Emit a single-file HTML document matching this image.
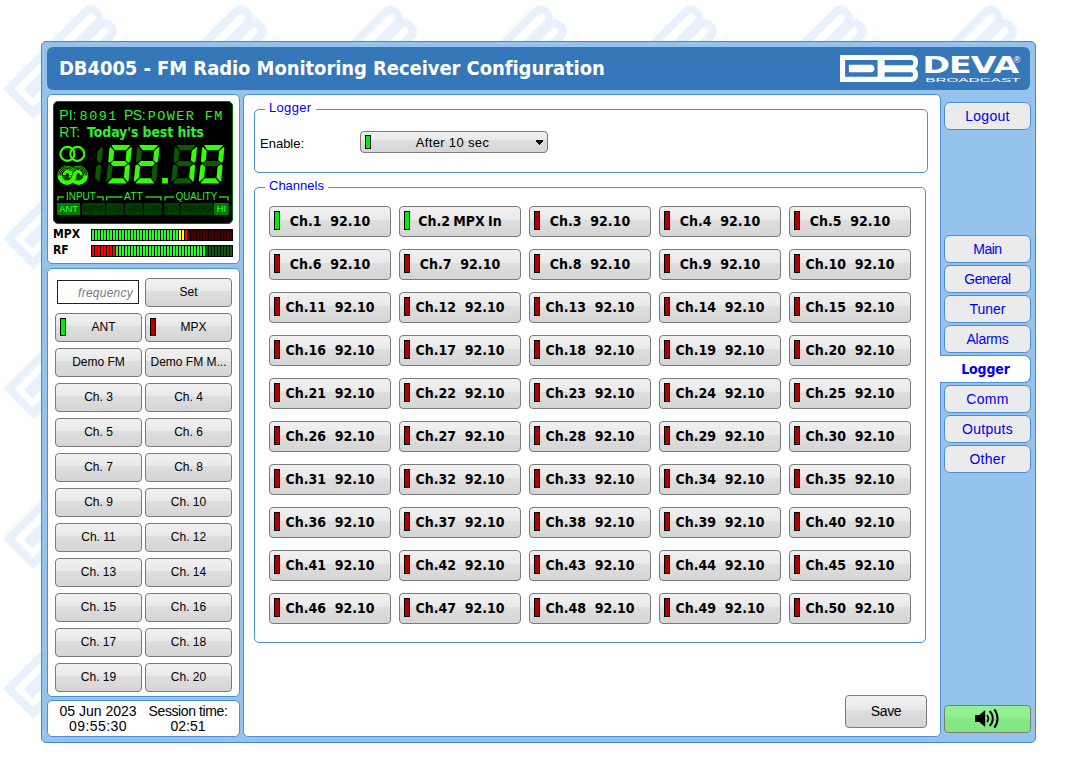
<!DOCTYPE html>
<html><head><meta charset="utf-8"><title>DB4005</title>
<style>
*{box-sizing:border-box;margin:0;padding:0}
html,body{width:1077px;height:784px;overflow:hidden;background:#fff}
body{position:relative;font-family:"Liberation Sans", sans-serif;font-size:13px;color:#000}
.abs{position:absolute}
#frame{position:absolute;left:41px;top:41px;width:995px;height:702px;background:#96c3ec;border:1px solid #4489cf;border-radius:5px}
#hdr{position:absolute;left:47px;top:47px;width:983px;height:43px;background:#3577b8;border-radius:6px}
#title{position:absolute;left:59px;top:55px;letter-spacing:-0.07px;font:bold 20px "DejaVu Sans Condensed", "Liberation Sans", sans-serif;color:#fff;white-space:pre;line-height:26px}
.panel{position:absolute;background:#fff;border:1px solid #4a90d6;border-radius:5px}
.btn{position:absolute;border:1px solid #7a7a7a;border-radius:4px;background:linear-gradient(to bottom,#f1f1f1 0%,#e9e9e9 45%,#dedede 46%,#d5d5d5 100%);text-align:center;white-space:pre;overflow:hidden}
.lb{width:87px;height:29px;font-size:12px;line-height:26px}
.cb{width:122px;height:31px;font:bold 14px "DejaVu Sans Condensed", "Liberation Sans", sans-serif;line-height:29px;text-align:left}
.cb span{position:absolute;left:0;right:0;top:0;text-align:center}
.ind{position:absolute;border:1px solid #000;width:6px}
.g{background:#00ee00}
.r{background:#b00000}
.nb{position:absolute;left:944px;width:87px;height:28px;background:#ebebeb;border:1px solid #4a8fd4;border-radius:6px;color:#0000f0;text-align:center;font-size:14px;line-height:26px}
.fs{position:absolute;border:1px solid #4a90d6;border-radius:5px}
.mlab{font:bold 12px "DejaVu Sans Condensed", "Liberation Sans", sans-serif;line-height:16px}
.tabsel{position:absolute;left:941px;width:90px;height:28px;background:#fff;border:1px solid #4a90d6;border-left:0;border-radius:0 7px 7px 0;color:#0000f0;text-align:center;font:bold 14px "DejaVu Sans Condensed", "Liberation Sans", sans-serif;letter-spacing:-0.15px;line-height:26px}
.lg{position:absolute;background:#fff;color:#0000f0;font-size:13px;line-height:15px;padding:0 4px}
</style></head>
<body>
<svg class="abs" style="left:0;top:0" width="1077" height="784"><defs><pattern id="wm" width="150" height="150" patternUnits="userSpaceOnUse"><g transform="translate(3,88.8) rotate(-45) scale(1.59)"><path fill="#e9f1fc" d="M0 0H70.5Q78 0 78 7Q78 11.8 75.3 13.4Q78 15 78 20Q78 27 70.5 27H0Z"/><path fill="#fff" d="M5.1 5.1H37.6V21.8H5.1Z"/><path fill="#e9f1fc" d="M8.9 9.7H30.6A3.8 3.8 0 0 1 30.6 17.3H8.9Z"/><path fill="#fff" d="M44.6 5.1H70.9A2.55 2.55 0 0 1 70.9 10.2H44.6Z"/><path fill="#fff" d="M44.6 17.3H70.9A2.25 2.25 0 0 1 70.9 21.8H44.6Z"/><circle cx="77.1" cy="31.9" r="1.7" fill="none" stroke="#e9f1fc" stroke-width="0.5"/></g></pattern></defs><rect width="1050" height="750" fill="url(#wm)"/></svg>
<div id="frame"></div>
<div id="hdr"></div>
<svg class="abs" style="left:836px;top:50px" width="192" height="38" viewBox="0 0 192 38"><g transform="translate(4,5)"><path fill="#fff" d="M0 0H70.5Q78 0 78 7Q78 11.8 75.3 13.4Q78 15 78 20Q78 27 70.5 27H0Z"/><path fill="#3577b8" d="M5.1 5.1H37.6V21.8H5.1Z"/><path fill="#fff" d="M8.9 9.7H30.6A3.8 3.8 0 0 1 30.6 17.3H8.9Z"/><path fill="#3577b8" d="M44.6 5.1H70.9A2.55 2.55 0 0 1 70.9 10.2H44.6Z"/><path fill="#3577b8" d="M44.6 17.3H70.9A2.25 2.25 0 0 1 70.9 21.8H44.6Z"/></g><text transform="translate(86.39999999999998,22.700000000000003) scale(1.49,1)" font-family="'DejaVu Sans','Liberation Sans',sans-serif" font-weight="bold" font-size="22.3" fill="#fff" letter-spacing="-0.6">DEVA</text><text x="89.20000000000005" y="31.700000000000003" font-family="'Liberation Sans',sans-serif" font-size="6" fill="#fff" textLength="95.3" lengthAdjust="spacingAndGlyphs">BROADCAST</text><text x="177.60000000000002" y="12.600000000000001" font-family="'Liberation Sans',sans-serif" font-size="9.5" fill="#fff">®</text></svg>
<div id="title">DB4005 - FM Radio Monitoring Receiver Configuration</div>
<div class="panel" style="left:47px;top:94px;width:193px;height:170px"></div>
<div class="panel" style="left:47px;top:268px;width:193px;height:429px"></div>
<div class="panel" style="left:47px;top:700px;width:193px;height:37px"></div>
<div class="panel" style="left:243px;top:94px;width:698px;height:643px"></div>
<svg class="abs" style="left:53px;top:101px" width="180" height="123" viewBox="0 0 180 123"><rect x="0.5" y="0.5" width="179" height="122" rx="4.5" fill="#000" stroke="#006a00"/><g fill="#2ff02f" font-family="'Liberation Sans',sans-serif" font-size="14"><text x="6.3" y="18.9">PI:</text><text x="26.6" y="18.9" font-family="'Liberation Mono',monospace" font-size="13.5" letter-spacing="1.45">8091</text><text x="71" y="18.9" letter-spacing="-0.5">PS:</text><text x="94.7" y="18.9" font-family="'Liberation Mono',monospace" font-size="13.5" letter-spacing="1.4" xml:space="preserve">POWER FM</text><text x="6.3" y="35.9">RT:</text><text x="34.1" y="35.9" font-family="'DejaVu Sans Condensed','Liberation Sans',sans-serif" font-weight="bold" font-size="14" letter-spacing="-0.12">Today's best hits</text></g><circle cx="14.400000000000006" cy="52.900000000000006" r="7.0" fill="none" stroke="#33ff00" stroke-width="2.1"/><circle cx="24.299999999999997" cy="52.900000000000006" r="7.0" fill="none" stroke="#33ff00" stroke-width="2.1"/><path d="M8.00 74.20A6.0 6.0 0 0 1 20.00 74.20" fill="none" stroke="#2fe800" stroke-width="0.8"/><path d="M6.45 74.20A7.55 7.55 0 0 1 21.55 74.20" fill="none" stroke="#2fe800" stroke-width="0.8"/><path d="M4.90 74.20A9.1 9.1 0 0 1 23.10 74.20" fill="none" stroke="#2fe800" stroke-width="0.8"/><path d="M19.50 74.20A6.0 6.0 0 0 1 31.50 74.20" fill="none" stroke="#2fe800" stroke-width="0.8"/><path d="M17.95 74.20A7.55 7.55 0 0 1 33.05 74.20" fill="none" stroke="#2fe800" stroke-width="0.8"/><path d="M16.40 74.20A9.1 9.1 0 0 1 34.60 74.20" fill="none" stroke="#2fe800" stroke-width="0.8"/><path d="M8.60 73.9A5.4 5.4 0 0 0 19.40 73.9Z" fill="#0e7000"/><path d="M16.50 73.90A2.5 2.5 0 0 1 11.50 73.90" fill="none" stroke="#021500" stroke-width="0.7"/><path d="M18.20 73.90A4.2 4.2 0 0 1 9.80 73.90" fill="none" stroke="#021500" stroke-width="0.7"/><path d="M20.10 73.9A5.4 5.4 0 0 0 30.90 73.9Z" fill="#0e7000"/><path d="M28.00 73.90A2.5 2.5 0 0 1 23.00 73.90" fill="none" stroke="#021500" stroke-width="0.7"/><path d="M29.70 73.90A4.2 4.2 0 0 1 21.30 73.90" fill="none" stroke="#021500" stroke-width="0.7"/><path d="M32.80 74.35000000000001A7.3 7.3 0 0 1 18.20 74.35000000000001" fill="none" stroke="#33ff00" stroke-width="4.5"/><path d="M17.85 73.9A2.65 2.65 0 0 0 11.35 73.9" fill="none" stroke="#33ff00" stroke-width="3.2"/><clipPath id="rdsc"><rect x="15.00" y="65.90" width="11.00" height="13.5"/></clipPath><g clip-path="url(#rdsc)"><path d="M6.70 74.35000000000001A7.3 7.3 0 0 0 21.30 74.35000000000001" fill="none" stroke="#042400" stroke-width="6.1"/><path d="M21.65 73.9A2.65 2.65 0 0 1 28.15 73.9" fill="none" stroke="#042400" stroke-width="4.800000000000001"/></g><path d="M6.70 74.35000000000001A7.3 7.3 0 0 0 21.30 74.35000000000001" fill="none" stroke="#33ff00" stroke-width="4.5"/><path d="M21.65 73.9A2.65 2.65 0 0 1 28.15 73.9" fill="none" stroke="#33ff00" stroke-width="3.2"/><path d="M21.00 74.65L22.55 72.4" stroke="#33ff00" stroke-width="3.4" fill="none"/><circle cx="14.00" cy="73.90" r="1.3" fill="#000"/><circle cx="25.50" cy="73.90" r="1.3" fill="#000"/><g transform="matrix(1,0,-0.0998,1,56.751,44.0)"><polygon points="1.80,0.45 2.40,0.00 20.00,0.00 20.60,0.45 16.65,5.30 5.75,5.30" fill="#33ff00"/><polygon points="22.40,3.00 21.75,1.75 17.40,5.95 17.40,15.15 20.55,17.80 22.25,16.55" fill="#33ff00"/><polygon points="22.25,20.55 20.55,19.30 17.40,21.85 17.40,32.55 21.75,36.75 22.40,35.50" fill="#33ff00"/><polygon points="1.80,38.05 2.40,38.50 20.00,38.50 20.60,38.05 16.65,33.20 5.75,33.20" fill="#33ff00"/><polygon points="0.15,20.55 1.85,19.30 5.00,21.85 5.00,32.55 0.65,36.75 0.00,35.50" fill="#0b5a00"/><polygon points="0.00,3.00 0.65,1.75 5.00,5.95 5.00,15.15 1.85,17.80 0.15,16.55" fill="#33ff00"/><polygon points="2.70,18.55 5.15,16.10 17.25,16.10 19.70,18.55 17.25,21.00 5.15,21.00" fill="#33ff00"/></g><g transform="matrix(1,0,-0.0998,1,84.351,44.0)"><polygon points="1.80,0.45 2.40,0.00 20.00,0.00 20.60,0.45 16.65,5.30 5.75,5.30" fill="#33ff00"/><polygon points="22.40,3.00 21.75,1.75 17.40,5.95 17.40,15.15 20.55,17.80 22.25,16.55" fill="#33ff00"/><polygon points="22.25,20.55 20.55,19.30 17.40,21.85 17.40,32.55 21.75,36.75 22.40,35.50" fill="#0b5a00"/><polygon points="1.80,38.05 2.40,38.50 20.00,38.50 20.60,38.05 16.65,33.20 5.75,33.20" fill="#33ff00"/><polygon points="0.15,20.55 1.85,19.30 5.00,21.85 5.00,32.55 0.65,36.75 0.00,35.50" fill="#33ff00"/><polygon points="0.00,3.00 0.65,1.75 5.00,5.95 5.00,15.15 1.85,17.80 0.15,16.55" fill="#0b5a00"/><polygon points="2.70,18.55 5.15,16.10 17.25,16.10 19.70,18.55 17.25,21.00 5.15,21.00" fill="#33ff00"/></g><g transform="matrix(1,0,-0.0998,1,121.951,44.0)"><polygon points="1.80,0.45 2.40,0.00 20.00,0.00 20.60,0.45 16.65,5.30 5.75,5.30" fill="#0b5a00"/><polygon points="22.40,3.00 21.75,1.75 17.40,5.95 17.40,15.15 20.55,17.80 22.25,16.55" fill="#33ff00"/><polygon points="22.25,20.55 20.55,19.30 17.40,21.85 17.40,32.55 21.75,36.75 22.40,35.50" fill="#33ff00"/><polygon points="1.80,38.05 2.40,38.50 20.00,38.50 20.60,38.05 16.65,33.20 5.75,33.20" fill="#0b5a00"/><polygon points="0.15,20.55 1.85,19.30 5.00,21.85 5.00,32.55 0.65,36.75 0.00,35.50" fill="#0b5a00"/><polygon points="0.00,3.00 0.65,1.75 5.00,5.95 5.00,15.15 1.85,17.80 0.15,16.55" fill="#0b5a00"/><polygon points="2.70,18.55 5.15,16.10 17.25,16.10 19.70,18.55 17.25,21.00 5.15,21.00" fill="#0b5a00"/></g><g transform="matrix(1,0,-0.0998,1,149.351,44.0)"><polygon points="1.80,0.45 2.40,0.00 20.00,0.00 20.60,0.45 16.65,5.30 5.75,5.30" fill="#33ff00"/><polygon points="22.40,3.00 21.75,1.75 17.40,5.95 17.40,15.15 20.55,17.80 22.25,16.55" fill="#33ff00"/><polygon points="22.25,20.55 20.55,19.30 17.40,21.85 17.40,32.55 21.75,36.75 22.40,35.50" fill="#33ff00"/><polygon points="1.80,38.05 2.40,38.50 20.00,38.50 20.60,38.05 16.65,33.20 5.75,33.20" fill="#33ff00"/><polygon points="0.15,20.55 1.85,19.30 5.00,21.85 5.00,32.55 0.65,36.75 0.00,35.50" fill="#33ff00"/><polygon points="0.00,3.00 0.65,1.75 5.00,5.95 5.00,15.15 1.85,17.80 0.15,16.55" fill="#33ff00"/><polygon points="2.70,18.55 5.15,16.10 17.25,16.10 19.70,18.55 17.25,21.00 5.15,21.00" fill="#0b5a00"/></g><g transform="matrix(1,0,-0.0998,1,27.851,44.0)"><polygon points="22.40,3.00 21.75,1.75 17.40,5.95 17.40,15.15 20.55,17.80 22.25,16.55" fill="#0b5a00"/><polygon points="22.25,20.55 20.55,19.30 17.40,21.85 17.40,32.55 21.75,36.75 22.40,35.50" fill="#0b5a00"/></g><rect x="109.1" y="76.9" width="5.8" height="5.6" fill="#33ff00"/><path d="M4.95 99.6V95.9H10.90" fill="none" stroke="#25c825" stroke-width="1.5"/><path d="M43.60 95.9H50.05V99.6" fill="none" stroke="#25c825" stroke-width="1.5"/><path d="M53.75 99.6V95.9H69.70" fill="none" stroke="#25c825" stroke-width="1.5"/><path d="M92.30 95.9H107.95V99.6" fill="none" stroke="#25c825" stroke-width="1.5"/><path d="M112.05 99.6V95.9H121.00" fill="none" stroke="#25c825" stroke-width="1.5"/><path d="M166.00 95.9H174.95V99.6" fill="none" stroke="#25c825" stroke-width="1.5"/><g fill="#2ff02f" font-family="'Liberation Sans',sans-serif" font-size="10.4" text-anchor="middle"><text x="27.900000000000006" y="98.80000000000001" textLength="30" lengthAdjust="spacingAndGlyphs">INPUT</text><text x="80.4" y="98.80000000000001">ATT</text><text x="143.5" y="98.80000000000001" textLength="41.5" lengthAdjust="spacingAndGlyphs">QUALITY</text></g><rect x="4.0" y="102" width="23.0" height="12" fill="#007a00"/><text x="15.50" y="110.5" fill="#3cff3c" font-family="'Liberation Sans',sans-serif" font-size="9.4" text-anchor="middle">ANT</text><rect x="29.0" y="102" width="23.0" height="12" fill="#003d00"/><text x="40.50" y="110.5" fill="#001f00" font-family="'Liberation Sans',sans-serif" font-size="9.4" text-anchor="middle">MPX</text><rect x="53.1" y="102" width="17.5" height="12" fill="#003d00"/><text x="61.85" y="110.5" fill="#001f00" font-family="'Liberation Sans',sans-serif" font-size="9.4" text-anchor="middle">-10</text><rect x="72.0" y="102" width="17.6" height="12" fill="#003d00"/><text x="80.80" y="110.5" fill="#001f00" font-family="'Liberation Sans',sans-serif" font-size="9.4" text-anchor="middle">-20</text><rect x="91.0" y="102" width="17.7" height="12" fill="#003d00"/><text x="99.85" y="110.5" fill="#001f00" font-family="'Liberation Sans',sans-serif" font-size="9.4" text-anchor="middle">-30</text><rect x="111.3" y="102" width="15.0" height="12" fill="#003d00"/><text x="118.80" y="110.5" fill="#001f00" font-family="'Liberation Sans',sans-serif" font-size="9.4" text-anchor="middle">LO</text><rect x="127.6" y="102" width="32.1" height="12" fill="#003d00"/><text x="143.65" y="110.5" fill="#001f00" font-family="'Liberation Sans',sans-serif" font-size="9.4" text-anchor="middle">GOOD</text><rect x="161.0" y="102" width="14.7" height="12" fill="#007a00"/><text x="168.35" y="110.5" fill="#3cff3c" font-family="'Liberation Sans',sans-serif" font-size="9.4" text-anchor="middle">HI</text></svg>
<svg class="abs" style="left:91px;top:229px" width="142" height="28" viewBox="0 0 142 28"><rect x="0" y="0" width="142" height="12" fill="#000"/><rect x="0" y="16" width="142" height="12" fill="#000"/><rect x="1" y="1" width="2" height="10" fill="#22ff22"/><rect x="1" y="17" width="2" height="10" fill="#ff0000"/><rect x="4" y="1" width="2" height="10" fill="#22ff22"/><rect x="4" y="17" width="2" height="10" fill="#ff0000"/><rect x="7" y="1" width="2" height="10" fill="#22ff22"/><rect x="7" y="17" width="2" height="10" fill="#ff0000"/><rect x="10" y="1" width="2" height="10" fill="#22ff22"/><rect x="10" y="17" width="2" height="10" fill="#ff0000"/><rect x="13" y="1" width="2" height="10" fill="#22ff22"/><rect x="13" y="17" width="2" height="10" fill="#ff0000"/><rect x="16" y="1" width="2" height="10" fill="#22ff22"/><rect x="16" y="17" width="2" height="10" fill="#ff0000"/><rect x="19" y="1" width="2" height="10" fill="#22ff22"/><rect x="19" y="17" width="2" height="10" fill="#ff0000"/><rect x="22" y="1" width="2" height="10" fill="#22ff22"/><rect x="22" y="17" width="2" height="10" fill="#ff0000"/><rect x="25" y="1" width="2" height="10" fill="#22ff22"/><rect x="25" y="17" width="2" height="10" fill="#22ff22"/><rect x="28" y="1" width="2" height="10" fill="#22ff22"/><rect x="28" y="17" width="2" height="10" fill="#22ff22"/><rect x="31" y="1" width="2" height="10" fill="#22ff22"/><rect x="31" y="17" width="2" height="10" fill="#22ff22"/><rect x="34" y="1" width="2" height="10" fill="#22ff22"/><rect x="34" y="17" width="2" height="10" fill="#22ff22"/><rect x="37" y="1" width="2" height="10" fill="#22ff22"/><rect x="37" y="17" width="2" height="10" fill="#22ff22"/><rect x="40" y="1" width="2" height="10" fill="#22ff22"/><rect x="40" y="17" width="2" height="10" fill="#22ff22"/><rect x="43" y="1" width="2" height="10" fill="#22ff22"/><rect x="43" y="17" width="2" height="10" fill="#22ff22"/><rect x="46" y="1" width="2" height="10" fill="#22ff22"/><rect x="46" y="17" width="2" height="10" fill="#22ff22"/><rect x="49" y="1" width="2" height="10" fill="#22ff22"/><rect x="49" y="17" width="2" height="10" fill="#22ff22"/><rect x="52" y="1" width="2" height="10" fill="#22ff22"/><rect x="52" y="17" width="2" height="10" fill="#22ff22"/><rect x="55" y="1" width="2" height="10" fill="#22ff22"/><rect x="55" y="17" width="2" height="10" fill="#22ff22"/><rect x="58" y="1" width="2" height="10" fill="#22ff22"/><rect x="58" y="17" width="2" height="10" fill="#22ff22"/><rect x="61" y="1" width="2" height="10" fill="#22ff22"/><rect x="61" y="17" width="2" height="10" fill="#22ff22"/><rect x="64" y="1" width="2" height="10" fill="#22ff22"/><rect x="64" y="17" width="2" height="10" fill="#22ff22"/><rect x="67" y="1" width="2" height="10" fill="#22ff22"/><rect x="67" y="17" width="2" height="10" fill="#22ff22"/><rect x="70" y="1" width="2" height="10" fill="#22ff22"/><rect x="70" y="17" width="2" height="10" fill="#22ff22"/><rect x="73" y="1" width="2" height="10" fill="#22ff22"/><rect x="73" y="17" width="2" height="10" fill="#22ff22"/><rect x="76" y="1" width="2" height="10" fill="#22ff22"/><rect x="76" y="17" width="2" height="10" fill="#22ff22"/><rect x="79" y="1" width="2" height="10" fill="#22ff22"/><rect x="79" y="17" width="2" height="10" fill="#22ff22"/><rect x="82" y="1" width="2" height="10" fill="#22ff22"/><rect x="82" y="17" width="2" height="10" fill="#22ff22"/><rect x="85" y="1" width="2" height="10" fill="#22ff22"/><rect x="85" y="17" width="2" height="10" fill="#22ff22"/><rect x="88" y="1" width="2" height="10" fill="#ffff00"/><rect x="88" y="17" width="2" height="10" fill="#22ff22"/><rect x="91" y="1" width="2" height="10" fill="#ffff00"/><rect x="91" y="17" width="2" height="10" fill="#22ff22"/><rect x="94" y="1" width="2" height="10" fill="#ff0000"/><rect x="94" y="17" width="2" height="10" fill="#22ff22"/><rect x="97" y="1" width="2" height="10" fill="#4c0000"/><rect x="97" y="17" width="2" height="10" fill="#22ff22"/><rect x="100" y="1" width="2" height="10" fill="#4c0000"/><rect x="100" y="17" width="2" height="10" fill="#22ff22"/><rect x="103" y="1" width="2" height="10" fill="#4c0000"/><rect x="103" y="17" width="2" height="10" fill="#22ff22"/><rect x="106" y="1" width="2" height="10" fill="#4c0000"/><rect x="106" y="17" width="2" height="10" fill="#22ff22"/><rect x="109" y="1" width="2" height="10" fill="#4c0000"/><rect x="109" y="17" width="2" height="10" fill="#22ff22"/><rect x="112" y="1" width="2" height="10" fill="#4c0000"/><rect x="112" y="17" width="2" height="10" fill="#22ff22"/><rect x="115" y="1" width="2" height="10" fill="#4c0000"/><rect x="115" y="17" width="2" height="10" fill="#0c5a0c"/><rect x="118" y="1" width="2" height="10" fill="#4c0000"/><rect x="118" y="17" width="2" height="10" fill="#0c5a0c"/><rect x="121" y="1" width="2" height="10" fill="#4c0000"/><rect x="121" y="17" width="2" height="10" fill="#0c5a0c"/><rect x="124" y="1" width="2" height="10" fill="#4c0000"/><rect x="124" y="17" width="2" height="10" fill="#0c5a0c"/><rect x="127" y="1" width="2" height="10" fill="#4c0000"/><rect x="127" y="17" width="2" height="10" fill="#0c5a0c"/><rect x="130" y="1" width="2" height="10" fill="#4c0000"/><rect x="130" y="17" width="2" height="10" fill="#0c5a0c"/><rect x="133" y="1" width="2" height="10" fill="#4c0000"/><rect x="133" y="17" width="2" height="10" fill="#0c5a0c"/><rect x="136" y="1" width="2" height="10" fill="#4c0000"/><rect x="136" y="17" width="2" height="10" fill="#0c5a0c"/><rect x="139" y="1" width="2" height="10" fill="#4c0000"/><rect x="139" y="17" width="2" height="10" fill="#0c5a0c"/></svg>
<div class="abs mlab" style="left:53px;top:226px">MPX</div>
<div class="abs mlab" style="left:53px;top:242px">RF</div>
<div class="abs" style="left:57px;top:280px;width:82px;height:24px;border:1px solid #222;background:#fff;font-style:italic;color:#7b7b7b;font-size:12px;line-height:24px;letter-spacing:0.25px;text-align:right;padding-right:5px">frequency</div>
<div class="btn lb" style="left:145px;top:278px">Set</div>
<div class="btn lb" style="left:55px;top:313px;padding-left:10px"><i class="ind g" style="left:4px;top:4px;height:18px"></i>ANT</div>
<div class="btn lb" style="left:145px;top:313px;padding-left:10px"><i class="ind r" style="left:4px;top:4px;height:18px"></i>MPX</div>
<div class="btn lb" style="left:55px;top:348px">Demo FM</div>
<div class="btn lb" style="left:145px;top:348px">Demo FM M...</div>
<div class="btn lb" style="left:55px;top:383px">Ch. 3</div>
<div class="btn lb" style="left:145px;top:383px">Ch. 4</div>
<div class="btn lb" style="left:55px;top:418px">Ch. 5</div>
<div class="btn lb" style="left:145px;top:418px">Ch. 6</div>
<div class="btn lb" style="left:55px;top:453px">Ch. 7</div>
<div class="btn lb" style="left:145px;top:453px">Ch. 8</div>
<div class="btn lb" style="left:55px;top:488px">Ch. 9</div>
<div class="btn lb" style="left:145px;top:488px">Ch. 10</div>
<div class="btn lb" style="left:55px;top:523px">Ch. 11</div>
<div class="btn lb" style="left:145px;top:523px">Ch. 12</div>
<div class="btn lb" style="left:55px;top:558px">Ch. 13</div>
<div class="btn lb" style="left:145px;top:558px">Ch. 14</div>
<div class="btn lb" style="left:55px;top:593px">Ch. 15</div>
<div class="btn lb" style="left:145px;top:593px">Ch. 16</div>
<div class="btn lb" style="left:55px;top:628px">Ch. 17</div>
<div class="btn lb" style="left:145px;top:628px">Ch. 18</div>
<div class="btn lb" style="left:55px;top:663px">Ch. 19</div>
<div class="btn lb" style="left:145px;top:663px">Ch. 20</div>
<div class="abs" style="left:48px;top:704px;width:100px;text-align:center;font-size:14px;line-height:15px">05 Jun 2023<br><span style="letter-spacing:0.45px">09:55:30</span></div>
<div class="abs" style="left:138px;top:704px;width:100px;text-align:center;font-size:14px;line-height:15px"><span style="letter-spacing:-0.4px">Session time:</span><br>02:51</div>
<div class="fs" style="left:254px;top:109px;width:674px;height:64px"></div>
<div class="lg" style="left:265px;top:100px;width:51px;letter-spacing:0.33px">Logger</div>
<div class="abs" style="left:260px;top:136px;font-size:13px;line-height:16px">Enable:</div>
<div class="btn" style="left:360px;top:131px;width:188px;height:22px;background:linear-gradient(to bottom,#efefef 0%,#eaeaea 40%,#dedede 41%,#d6d6d6 100%);font-size:13px;line-height:21px;letter-spacing:0.35px;padding-right:3px"><i class="ind g" style="left:4px;top:3px;height:14px"></i>After 10 sec<svg class="abs" style="right:4px;top:8px" width="7" height="5" viewBox="0 0 7 5" shape-rendering="crispEdges"><path d="M0 0H7V2H6V3H5V4H4V5H3V4H2V3H1V2H0Z" fill="#000"/></svg></div>
<div class="fs" style="left:254px;top:187px;width:672px;height:456px"></div>
<div class="lg" style="left:265px;top:178px;width:63px">Channels</div>
<div class="btn cb" style="left:269px;top:206px"><i class="ind g" style="left:4px;top:4px;height:19px"></i><span>Ch.1  92.10</span></div>
<div class="btn cb" style="left:399px;top:206px"><i class="ind g" style="left:4px;top:4px;height:19px"></i><span style="word-spacing:-1.2px">Ch.2 MPX In</span></div>
<div class="btn cb" style="left:529px;top:206px"><i class="ind r" style="left:4px;top:4px;height:19px"></i><span>Ch.3  92.10</span></div>
<div class="btn cb" style="left:659px;top:206px"><i class="ind r" style="left:4px;top:4px;height:19px"></i><span>Ch.4  92.10</span></div>
<div class="btn cb" style="left:789px;top:206px"><i class="ind r" style="left:4px;top:4px;height:19px"></i><span>Ch.5  92.10</span></div>
<div class="btn cb" style="left:269px;top:249px"><i class="ind r" style="left:4px;top:4px;height:19px"></i><span>Ch.6  92.10</span></div>
<div class="btn cb" style="left:399px;top:249px"><i class="ind r" style="left:4px;top:4px;height:19px"></i><span>Ch.7  92.10</span></div>
<div class="btn cb" style="left:529px;top:249px"><i class="ind r" style="left:4px;top:4px;height:19px"></i><span>Ch.8  92.10</span></div>
<div class="btn cb" style="left:659px;top:249px"><i class="ind r" style="left:4px;top:4px;height:19px"></i><span>Ch.9  92.10</span></div>
<div class="btn cb" style="left:789px;top:249px"><i class="ind r" style="left:4px;top:4px;height:19px"></i><span>Ch.10  92.10</span></div>
<div class="btn cb" style="left:269px;top:292px"><i class="ind r" style="left:4px;top:4px;height:19px"></i><span>Ch.11  92.10</span></div>
<div class="btn cb" style="left:399px;top:292px"><i class="ind r" style="left:4px;top:4px;height:19px"></i><span>Ch.12  92.10</span></div>
<div class="btn cb" style="left:529px;top:292px"><i class="ind r" style="left:4px;top:4px;height:19px"></i><span>Ch.13  92.10</span></div>
<div class="btn cb" style="left:659px;top:292px"><i class="ind r" style="left:4px;top:4px;height:19px"></i><span>Ch.14  92.10</span></div>
<div class="btn cb" style="left:789px;top:292px"><i class="ind r" style="left:4px;top:4px;height:19px"></i><span>Ch.15  92.10</span></div>
<div class="btn cb" style="left:269px;top:335px"><i class="ind r" style="left:4px;top:4px;height:19px"></i><span>Ch.16  92.10</span></div>
<div class="btn cb" style="left:399px;top:335px"><i class="ind r" style="left:4px;top:4px;height:19px"></i><span>Ch.17  92.10</span></div>
<div class="btn cb" style="left:529px;top:335px"><i class="ind r" style="left:4px;top:4px;height:19px"></i><span>Ch.18  92.10</span></div>
<div class="btn cb" style="left:659px;top:335px"><i class="ind r" style="left:4px;top:4px;height:19px"></i><span>Ch.19  92.10</span></div>
<div class="btn cb" style="left:789px;top:335px"><i class="ind r" style="left:4px;top:4px;height:19px"></i><span>Ch.20  92.10</span></div>
<div class="btn cb" style="left:269px;top:378px"><i class="ind r" style="left:4px;top:4px;height:19px"></i><span>Ch.21  92.10</span></div>
<div class="btn cb" style="left:399px;top:378px"><i class="ind r" style="left:4px;top:4px;height:19px"></i><span>Ch.22  92.10</span></div>
<div class="btn cb" style="left:529px;top:378px"><i class="ind r" style="left:4px;top:4px;height:19px"></i><span>Ch.23  92.10</span></div>
<div class="btn cb" style="left:659px;top:378px"><i class="ind r" style="left:4px;top:4px;height:19px"></i><span>Ch.24  92.10</span></div>
<div class="btn cb" style="left:789px;top:378px"><i class="ind r" style="left:4px;top:4px;height:19px"></i><span>Ch.25  92.10</span></div>
<div class="btn cb" style="left:269px;top:421px"><i class="ind r" style="left:4px;top:4px;height:19px"></i><span>Ch.26  92.10</span></div>
<div class="btn cb" style="left:399px;top:421px"><i class="ind r" style="left:4px;top:4px;height:19px"></i><span>Ch.27  92.10</span></div>
<div class="btn cb" style="left:529px;top:421px"><i class="ind r" style="left:4px;top:4px;height:19px"></i><span>Ch.28  92.10</span></div>
<div class="btn cb" style="left:659px;top:421px"><i class="ind r" style="left:4px;top:4px;height:19px"></i><span>Ch.29  92.10</span></div>
<div class="btn cb" style="left:789px;top:421px"><i class="ind r" style="left:4px;top:4px;height:19px"></i><span>Ch.30  92.10</span></div>
<div class="btn cb" style="left:269px;top:464px"><i class="ind r" style="left:4px;top:4px;height:19px"></i><span>Ch.31  92.10</span></div>
<div class="btn cb" style="left:399px;top:464px"><i class="ind r" style="left:4px;top:4px;height:19px"></i><span>Ch.32  92.10</span></div>
<div class="btn cb" style="left:529px;top:464px"><i class="ind r" style="left:4px;top:4px;height:19px"></i><span>Ch.33  92.10</span></div>
<div class="btn cb" style="left:659px;top:464px"><i class="ind r" style="left:4px;top:4px;height:19px"></i><span>Ch.34  92.10</span></div>
<div class="btn cb" style="left:789px;top:464px"><i class="ind r" style="left:4px;top:4px;height:19px"></i><span>Ch.35  92.10</span></div>
<div class="btn cb" style="left:269px;top:507px"><i class="ind r" style="left:4px;top:4px;height:19px"></i><span>Ch.36  92.10</span></div>
<div class="btn cb" style="left:399px;top:507px"><i class="ind r" style="left:4px;top:4px;height:19px"></i><span>Ch.37  92.10</span></div>
<div class="btn cb" style="left:529px;top:507px"><i class="ind r" style="left:4px;top:4px;height:19px"></i><span>Ch.38  92.10</span></div>
<div class="btn cb" style="left:659px;top:507px"><i class="ind r" style="left:4px;top:4px;height:19px"></i><span>Ch.39  92.10</span></div>
<div class="btn cb" style="left:789px;top:507px"><i class="ind r" style="left:4px;top:4px;height:19px"></i><span>Ch.40  92.10</span></div>
<div class="btn cb" style="left:269px;top:550px"><i class="ind r" style="left:4px;top:4px;height:19px"></i><span>Ch.41  92.10</span></div>
<div class="btn cb" style="left:399px;top:550px"><i class="ind r" style="left:4px;top:4px;height:19px"></i><span>Ch.42  92.10</span></div>
<div class="btn cb" style="left:529px;top:550px"><i class="ind r" style="left:4px;top:4px;height:19px"></i><span>Ch.43  92.10</span></div>
<div class="btn cb" style="left:659px;top:550px"><i class="ind r" style="left:4px;top:4px;height:19px"></i><span>Ch.44  92.10</span></div>
<div class="btn cb" style="left:789px;top:550px"><i class="ind r" style="left:4px;top:4px;height:19px"></i><span>Ch.45  92.10</span></div>
<div class="btn cb" style="left:269px;top:593px"><i class="ind r" style="left:4px;top:4px;height:19px"></i><span>Ch.46  92.10</span></div>
<div class="btn cb" style="left:399px;top:593px"><i class="ind r" style="left:4px;top:4px;height:19px"></i><span>Ch.47  92.10</span></div>
<div class="btn cb" style="left:529px;top:593px"><i class="ind r" style="left:4px;top:4px;height:19px"></i><span>Ch.48  92.10</span></div>
<div class="btn cb" style="left:659px;top:593px"><i class="ind r" style="left:4px;top:4px;height:19px"></i><span>Ch.49  92.10</span></div>
<div class="btn cb" style="left:789px;top:593px"><i class="ind r" style="left:4px;top:4px;height:19px"></i><span>Ch.50  92.10</span></div>
<div class="btn" style="left:845px;top:695px;width:82px;height:33px;font-size:14px;line-height:31px;letter-spacing:-0.3px">Save</div>
<div class="nb" style="top:102px;height:28px;letter-spacing:0.3px">Logout</div>
<div class="nb" style="top:235px;letter-spacing:-0.5px">Main</div>
<div class="nb" style="top:265px;letter-spacing:-0.5px">General</div>
<div class="nb" style="top:295px;letter-spacing:0px">Tuner</div>
<div class="nb" style="top:325px;letter-spacing:-0.25px">Alarms</div>
<div class="tabsel" style="top:355px">Logger</div>
<div class="abs" style="left:940px;top:356px;width:2px;height:26px;background:#fff"></div>
<div class="nb" style="top:385px;letter-spacing:0.35px">Comm</div>
<div class="nb" style="top:415px;letter-spacing:0.28px">Outputs</div>
<div class="nb" style="top:445px;letter-spacing:0.2px">Other</div>
<div class="abs" style="left:944px;top:705px;width:87px;height:28px;background:linear-gradient(to bottom,#93f293 0%,#8eee8e 45%,#86e886 46%,#82e482 100%);border:1px solid #7c7c70;border-radius:4px"></div>
<svg class="abs" style="left:944px;top:705px" width="87" height="28" viewBox="0 0 87 28"><path fill="#000" d="M31.100000000000023 9.899999999999977H35.299999999999955L41.200000000000045 5V22L35.299999999999955 16.899999999999977H31.100000000000023Z"/><path d="M43.01 10.00A5.6 5.6 0 0 1 43.01 16.90" fill="none" stroke="#000" stroke-width="1.7"/><path d="M45.56 5.99A10.2 10.2 0 0 1 45.56 20.91" fill="none" stroke="#000" stroke-width="1.9"/><path d="M50.34 4.28A14.9 14.9 0 0 1 50.34 22.62" fill="none" stroke="#000" stroke-width="2.0"/></svg>
</body></html>
